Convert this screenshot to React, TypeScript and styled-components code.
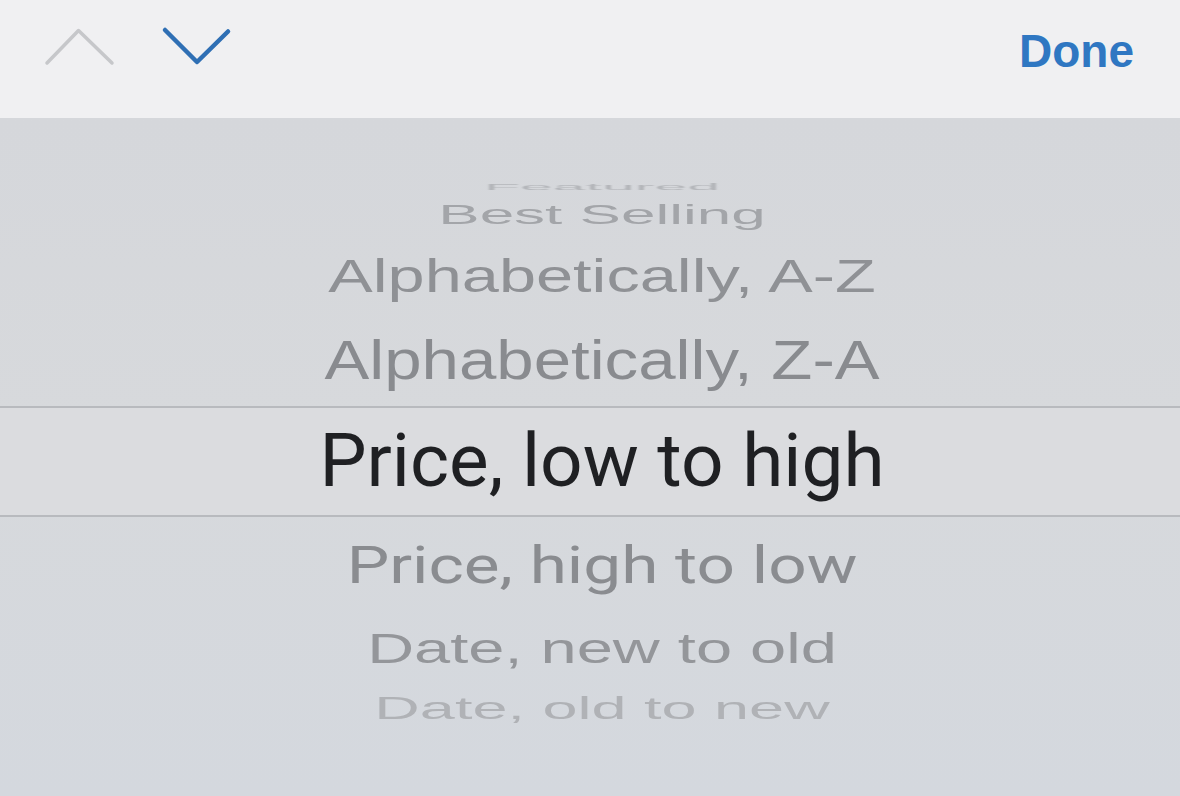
import styled, { createGlobalStyle } from 'styled-components'

const GlobalStyle = createGlobalStyle`
  html, body {
    margin: 0;
    padding: 0;
    background: #d5d7db;
  }

  #root {
    width: 1180px;
    height: 796px;
    overflow: hidden;
  }
`

type Face = 'sans' | 'roboto'

interface SortOption {
  label: string
  rowHeight: number
  size: number
  squash: number
  tone: string
  face: Face
  blur?: number
  selected?: boolean
}

const OPTIONS: SortOption[] = [
  { label: 'Featured', rowHeight: 6, size: 59, squash: 0.15, tone: '#b4b6ba', face: 'sans', blur: 0.8 },
  { label: 'Best Selling', rowHeight: 50, size: 62, squash: 0.45, tone: '#a3a5a9', face: 'sans', blur: 0.6 },
  { label: 'Alphabetically, A-Z', rowHeight: 73, size: 66.7, squash: 0.7, tone: '#8f9195', face: 'sans' },
  { label: 'Alphabetically, Z-A', rowHeight: 93, size: 67.2, squash: 0.84, tone: '#898b8f', face: 'sans' },
  { label: 'Price, low to high', rowHeight: 111, size: 74.7, squash: 1, tone: '#1f2023', face: 'roboto', selected: true },
  { label: 'Price, high to low', rowHeight: 96, size: 67.5, squash: 0.77, tone: '#8a8c90', face: 'roboto' },
  { label: 'Date, new to old', rowHeight: 70, size: 65, squash: 0.65, tone: '#94969a', face: 'sans' },
  { label: 'Date, old to new', rowHeight: 50, size: 63, squash: 0.51, tone: '#b0b2b6', face: 'sans', blur: 0.6 },
]

const App = () => {
  return (
    <>
      <GlobalStyle />
      <Page>
        <Toolbar>
          <NavArrows>
            <ArrowButton aria-label='Previous'>
              <svg width='72' height='48' viewBox='0 0 72 48'>
                <path
                  d='M3 36 L34.5 3.5 L68 36'
                  fill='none'
                  stroke='#c6c7ca'
                  strokeWidth='3.5'
                  strokeLinecap='round'
                  strokeLinejoin='round'
                />
              </svg>
            </ArrowButton>
            <ArrowButton aria-label='Next'>
              <svg width='72' height='48' viewBox='0 0 72 48'>
                <path
                  d='M5 3 L37 35 L68 4.5'
                  fill='none'
                  stroke='#2f6fb4'
                  strokeWidth='4.5'
                  strokeLinecap='round'
                  strokeLinejoin='round'
                />
              </svg>
            </ArrowButton>
          </NavArrows>

          <DoneButton>Done</DoneButton>
        </Toolbar>

        <Wheel>
          {OPTIONS.map((option) => (
            <OptionRow key={option.label} $height={option.rowHeight} $selected={option.selected}>
              <OptionLabel
                $size={option.size}
                $squash={option.squash}
                $tone={option.tone}
                $face={option.face}
                $blur={option.blur}
              >
                {option.label}
              </OptionLabel>
            </OptionRow>
          ))}
        </Wheel>
      </Page>
    </>
  )
}

export default App

const Page = styled.div`
  width: 1180px;
  height: 796px;
  display: flex;
  flex-direction: column;
  background: #d5d7db;
`

const Toolbar = styled.div`
  height: 118px;
  flex-shrink: 0;
  box-sizing: border-box;
  display: flex;
  align-items: center;
  padding: 0 46px 16px 44px;
  background: #f0f0f2;
`

const NavArrows = styled.div`
  display: flex;
  align-items: center;
  gap: 44px;
`

const ArrowButton = styled.button`
  display: flex;
  padding: 0;
  border: none;
  background: none;

  svg {
    overflow: visible;
  }
`

const DoneButton = styled.button`
  margin-left: auto;
  padding: 0;
  border: none;
  background: none;
  font-family: 'Liberation Sans', Arial, sans-serif;
  font-size: 46px;
  font-weight: 700;
  line-height: 1;
  color: #2f77c2;
`

const Wheel = styled.div`
  flex: 1;
  display: flex;
  flex-direction: column;
  padding: 66px 0 0 24px;
  background: linear-gradient(180deg, #d5d7db 0%, #d7d9dc 45%, #d4d8de 100%);
`

const OptionRow = styled.div<{ $height: number; $selected?: boolean }>`
  height: ${({ $height }) => $height}px;
  flex-shrink: 0;
  box-sizing: border-box;
  display: flex;
  align-items: center;
  justify-content: center;
  margin-left: ${({ $selected }) => ($selected ? '-24px' : '0')};
  padding-left: ${({ $selected }) => ($selected ? '24px' : '0')};
  border-top: ${({ $selected }) => ($selected ? '2px solid #b8babe' : 'none')};
  border-bottom: ${({ $selected }) => ($selected ? '2px solid #b8babe' : 'none')};
  background: ${({ $selected }) => ($selected ? '#dbdcdf' : 'transparent')};
`

const OptionLabel = styled.span<{
  $size: number
  $squash: number
  $tone: string
  $face: Face
  $blur?: number
}>`
  display: block;
  white-space: nowrap;
  font-family: ${({ $face }) =>
    $face === 'roboto' ? 'Roboto, "Noto Sans", sans-serif' : '"Liberation Sans", Arial, sans-serif'};
  font-size: ${({ $size }) => $size}px;
  line-height: 1;
  color: ${({ $tone }) => $tone};
  transform: scaleY(${({ $squash }) => $squash});
  filter: ${({ $blur }) => ($blur ? `blur(${$blur}px)` : 'none')};
`
